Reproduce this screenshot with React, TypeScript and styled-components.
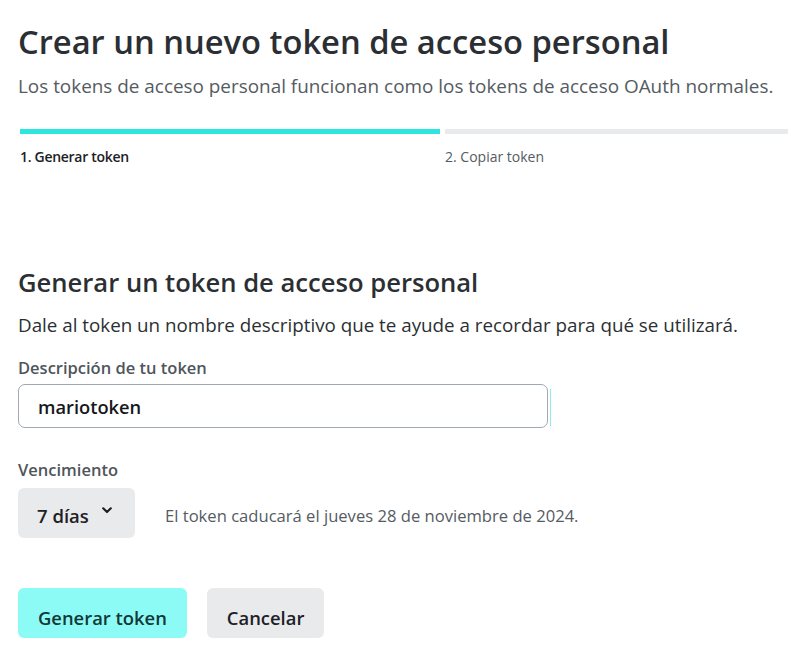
import styled, { createGlobalStyle } from "styled-components";

const GlobalStyle = createGlobalStyle`
  html, body {
    margin: 0;
    padding: 0;
    background: #ffffff;
    overflow-x: hidden;
    font-family: "Open Sans", "Noto Sans", sans-serif;
    color: #2b2f33;
  }
`

const Page = styled.div`
  padding: 18px 0 40px 18px;
  width: 900px;
`
const Title = styled.h1`
  margin: 0;
  font-size: 32.7px;
  font-weight: 600;
  line-height: 48px;
  color: #2b2f33;
`
const Lead = styled.p`
  margin: 5px 0 0;
  font-size: 18.9px;
  line-height: 30px;
  color: #555b62;
`
const Steps = styled.div`
  display: grid;
  grid-template-columns: 420px 420px;
  column-gap: 5px;
  margin: 28px 0 0 2px;
`
const Step = styled.div`
  display: flex;
  flex-direction: column;
  gap: 14px;
`
const Bar = styled.div<{ $active?: boolean }>`
  height: 5px;
  background: ${(p) => (p.$active ? "#2ee6e0" : "#e9eaec")};
`
const StepLabel = styled.span<{ $active?: boolean }>`
  font-size: 14px;
  line-height: 18px;
  font-weight: ${(p) => (p.$active ? 600 : 400)};
  color: ${(p) => (p.$active ? "#1d2125" : "#555b62")};
  letter-spacing: ${(p) => (p.$active ? "-0.3px" : "0")};
`
const Section = styled.section`
  margin-top: 100px;
`
const Heading = styled.h2`
  margin: 0;
  font-size: 25.6px;
  font-weight: 600;
  line-height: 34px;
  color: #2b2f33;
`
const Text = styled.p`
  margin: 12px 0 0;
  font-size: 18.8px;
  line-height: 26px;
  color: #2b2f33;
`
const Field = styled.div<{ $spaced?: boolean }>`
  display: flex;
  flex-direction: column;
  gap: 5px;
  margin-top: ${(p) => (p.$spaced ? "31px" : "19px")};
`
const Label = styled.label`
  font-size: 16.5px;
  font-weight: 600;
  line-height: 22px;
  color: #4f555b;
`
const InputWrap = styled.div`
  position: relative;
  width: 530px;

  &::after {
    content: "";
    position: absolute;
    right: -3px;
    top: 5px;
    bottom: 2px;
    width: 1px;
    background: #8ef0ee;
  }
`
const Input = styled.input`
  box-sizing: border-box;
  width: 530px;
  height: 44px;
  padding: 0 19px;
  border: 1px solid #a0a8b2;
  border-radius: 7px;
  font-family: "Open Sans", "Noto Sans", sans-serif;
  font-size: 18.3px;
  font-weight: 600;
  color: #15181b;
  outline: none;
  background: #fff;
`
const ExpiryRow = styled.div`
  display: flex;
  align-items: center;
  gap: 30px;
  margin-top: 2px;
`
const SelectButton = styled.button`
  display: flex;
  align-items: center;
  gap: 13px;
  height: 50px;
  width: 117px;
  padding: 5px 0 0 19px;
  border: none;
  border-radius: 6px;
  background: #e9eaec;
  font-family: "Open Sans", "Noto Sans", sans-serif;
  font-size: 18.5px;
  font-weight: 600;
  color: #1d2125;
  cursor: pointer;

  svg {
    margin-top: -10px;
  }
`
const Hint = styled.span`
  font-size: 16.6px;
  color: #555b62;
  margin-top: 4px;
`
const Actions = styled.div`
  display: flex;
  gap: 20px;
  margin-top: 50px;
`
const Button = styled.button<{ $primary?: boolean }>`
  height: 50px;
  padding: 8px 20px 0;
  border: none;
  border-radius: 6px;
  background: ${(p) => (p.$primary ? "#8dfbf5" : "#e9eaec")};
  color: ${(p) => (p.$primary ? "#12383a" : "#1d2125")};
  font-family: "Open Sans", "Noto Sans", sans-serif;
  font-size: 18.4px;
  font-weight: 600;
  cursor: pointer;
`

function Chevron() {
  return (
    <svg width="10" height="7" viewBox="0 0 10 7" fill="none">
      <path d="M1.2 1.3 L5 5 L8.8 1.3" stroke="#1d2125" strokeWidth="2.2" strokeLinecap="round" strokeLinejoin="round" />
    </svg>
  )
}

export default function App() {
  return (
    <>
      <GlobalStyle />
      <Page>
        <Title>Crear un nuevo token de acceso personal</Title>
        <Lead>Los tokens de acceso personal funcionan como los tokens de acceso OAuth normales.</Lead>
        <Steps>
          <Step>
            <Bar $active />
            <StepLabel $active>1. Generar token</StepLabel>
          </Step>
          <Step>
            <Bar />
            <StepLabel>2. Copiar token</StepLabel>
          </Step>
        </Steps>
        <Section>
          <Heading>Generar un token de acceso personal</Heading>
          <Text>Dale al token un nombre descriptivo que te ayude a recordar para qué se utilizará.</Text>
          <Field>
            <Label htmlFor="token-desc">Descripción de tu token</Label>
            <InputWrap>
              <Input id="token-desc" defaultValue="mariotoken" />
            </InputWrap>
          </Field>
          <Field $spaced>
            <Label>Vencimiento</Label>
            <ExpiryRow>
              <SelectButton>
                7 días <Chevron />
              </SelectButton>
              <Hint>El token caducará el jueves 28 de noviembre de 2024.</Hint>
            </ExpiryRow>
          </Field>
          <Actions>
            <Button $primary>Generar token</Button>
            <Button>Cancelar</Button>
          </Actions>
        </Section>
      </Page>
    </>
  )
}
